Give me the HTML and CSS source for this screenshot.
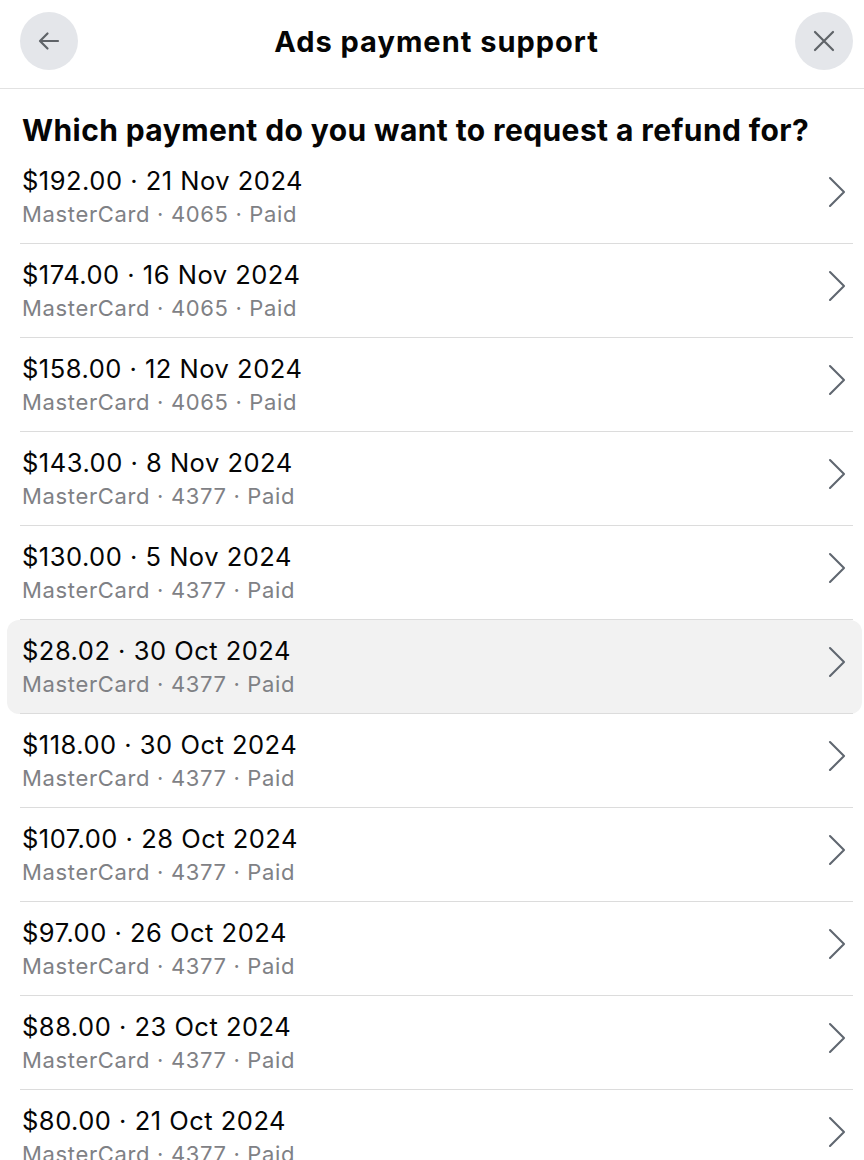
FILE: index.html
```html
<!DOCTYPE html>
<html lang="en">
<head>
<meta charset="utf-8">
<title>Ads payment support</title>
<link rel="stylesheet" href="styles.css">
</head>
<body>
<header class="topbar">
  <button class="circle-btn" aria-label="Back">
    <svg width="26" height="26" viewBox="0 0 26 26"><path d="M22 13H4.5M11.5 5.5L4 13l7.5 7.5" fill="none" stroke="#5f6368" stroke-width="2.2" stroke-linecap="round" stroke-linejoin="round"/></svg>
  </button>
  <h1 class="title">Ads payment support</h1>
  <button class="circle-btn" aria-label="Close">
    <svg width="28" height="28" viewBox="0 0 28 28"><path d="M5 5L23 23M23 5L5 23" fill="none" stroke="#5f6368" stroke-width="2.2" stroke-linecap="round"/></svg>
  </button>
</header>
<main>
  <h2 class="question">Which payment do you want to request a refund for?</h2>
  <ul class="list">
    <li class="row"><div class="row-inner"><div class="texts"><div class="main">$192.00 · 21 Nov 2024</div><div class="sub">MasterCard · 4065 · Paid</div></div><svg class="chev" width="20" height="32" viewBox="0 0 20 32"><path d="M3 2l14 14L3 30" fill="none" stroke="#606770" stroke-width="2.1" stroke-linecap="round" stroke-linejoin="round"/></svg></div></li>
    <li class="row"><div class="row-inner"><div class="texts"><div class="main">$174.00 · 16 Nov 2024</div><div class="sub">MasterCard · 4065 · Paid</div></div><svg class="chev" width="20" height="32" viewBox="0 0 20 32"><path d="M3 2l14 14L3 30" fill="none" stroke="#606770" stroke-width="2.1" stroke-linecap="round" stroke-linejoin="round"/></svg></div></li>
    <li class="row"><div class="row-inner"><div class="texts"><div class="main">$158.00 · 12 Nov 2024</div><div class="sub">MasterCard · 4065 · Paid</div></div><svg class="chev" width="20" height="32" viewBox="0 0 20 32"><path d="M3 2l14 14L3 30" fill="none" stroke="#606770" stroke-width="2.1" stroke-linecap="round" stroke-linejoin="round"/></svg></div></li>
    <li class="row"><div class="row-inner"><div class="texts"><div class="main">$143.00 · 8 Nov 2024</div><div class="sub">MasterCard · 4377 · Paid</div></div><svg class="chev" width="20" height="32" viewBox="0 0 20 32"><path d="M3 2l14 14L3 30" fill="none" stroke="#606770" stroke-width="2.1" stroke-linecap="round" stroke-linejoin="round"/></svg></div></li>
    <li class="row"><div class="row-inner"><div class="texts"><div class="main">$130.00 · 5 Nov 2024</div><div class="sub">MasterCard · 4377 · Paid</div></div><svg class="chev" width="20" height="32" viewBox="0 0 20 32"><path d="M3 2l14 14L3 30" fill="none" stroke="#606770" stroke-width="2.1" stroke-linecap="round" stroke-linejoin="round"/></svg></div></li>
    <li class="row active"><div class="row-inner"><div class="texts"><div class="main">$28.02 · 30 Oct 2024</div><div class="sub">MasterCard · 4377 · Paid</div></div><svg class="chev" width="20" height="32" viewBox="0 0 20 32"><path d="M3 2l14 14L3 30" fill="none" stroke="#606770" stroke-width="2.1" stroke-linecap="round" stroke-linejoin="round"/></svg></div></li>
    <li class="row"><div class="row-inner"><div class="texts"><div class="main">$118.00 · 30 Oct 2024</div><div class="sub">MasterCard · 4377 · Paid</div></div><svg class="chev" width="20" height="32" viewBox="0 0 20 32"><path d="M3 2l14 14L3 30" fill="none" stroke="#606770" stroke-width="2.1" stroke-linecap="round" stroke-linejoin="round"/></svg></div></li>
    <li class="row"><div class="row-inner"><div class="texts"><div class="main">$107.00 · 28 Oct 2024</div><div class="sub">MasterCard · 4377 · Paid</div></div><svg class="chev" width="20" height="32" viewBox="0 0 20 32"><path d="M3 2l14 14L3 30" fill="none" stroke="#606770" stroke-width="2.1" stroke-linecap="round" stroke-linejoin="round"/></svg></div></li>
    <li class="row"><div class="row-inner"><div class="texts"><div class="main">$97.00 · 26 Oct 2024</div><div class="sub">MasterCard · 4377 · Paid</div></div><svg class="chev" width="20" height="32" viewBox="0 0 20 32"><path d="M3 2l14 14L3 30" fill="none" stroke="#606770" stroke-width="2.1" stroke-linecap="round" stroke-linejoin="round"/></svg></div></li>
    <li class="row"><div class="row-inner"><div class="texts"><div class="main">$88.00 · 23 Oct 2024</div><div class="sub">MasterCard · 4377 · Paid</div></div><svg class="chev" width="20" height="32" viewBox="0 0 20 32"><path d="M3 2l14 14L3 30" fill="none" stroke="#606770" stroke-width="2.1" stroke-linecap="round" stroke-linejoin="round"/></svg></div></li>
    <li class="row"><div class="row-inner"><div class="texts"><div class="main">$80.00 · 21 Oct 2024</div><div class="sub">MasterCard · 4377 · Paid</div></div><svg class="chev" width="20" height="32" viewBox="0 0 20 32"><path d="M3 2l14 14L3 30" fill="none" stroke="#606770" stroke-width="2.1" stroke-linecap="round" stroke-linejoin="round"/></svg></div></li>
  </ul>
</main>
</body>
</html>
```

FILE: styles.css
```css
html, body {
  margin: 0;
  padding: 0;
  background: #ffffff;
}
body {
  font-family: Inter, "Noto Sans", Roboto, sans-serif;
  color: #050505;
}
.topbar {
  height: 88px;
  border-bottom: 1px solid #e2e2e2;
  display: flex;
  align-items: center;
  justify-content: space-between;
  padding: 0 11px 0 20px;
}
.circle-btn {
  width: 58px;
  height: 58px;
  border-radius: 50%;
  border: none;
  background: #e4e6ea;
  display: flex;
  align-items: center;
  justify-content: center;
  padding: 0;
  margin-top: -6px;
}
.title {
  margin: -6px 0 0 0;
  font-size: 29px;
  font-weight: 700;
  letter-spacing: 1px;
}
.question {
  margin: 21px 0 0 22px;
  font-size: 30px;
  line-height: 40px;
  font-weight: 700;
  letter-spacing: 0.4px;
}
.list {
  list-style: none;
  margin: 0;
  padding: 0;
}
.row {
  margin: 0 2px 0 7px;
  padding: 0 9px 0 13px;
  border-radius: 12px;
}
.row.active {
  background: #f2f2f2;
}
.row-inner {
  height: 93px;
  border-bottom: 1px solid #dcdcdc;
  display: flex;
  align-items: center;
  justify-content: space-between;
  padding-right: 6px;
}
.texts {
  display: flex;
  flex-direction: column;
  padding: 2px 0 0 2px;
}
.main {
  font-size: 25.5px;
  line-height: 32px;
  letter-spacing: 0.5px;
}
.sub {
  font-size: 22px;
  line-height: 34px;
  color: #7f8185;
  letter-spacing: 0.65px;
}
.chev {
  margin-top: -10px;
}
```
